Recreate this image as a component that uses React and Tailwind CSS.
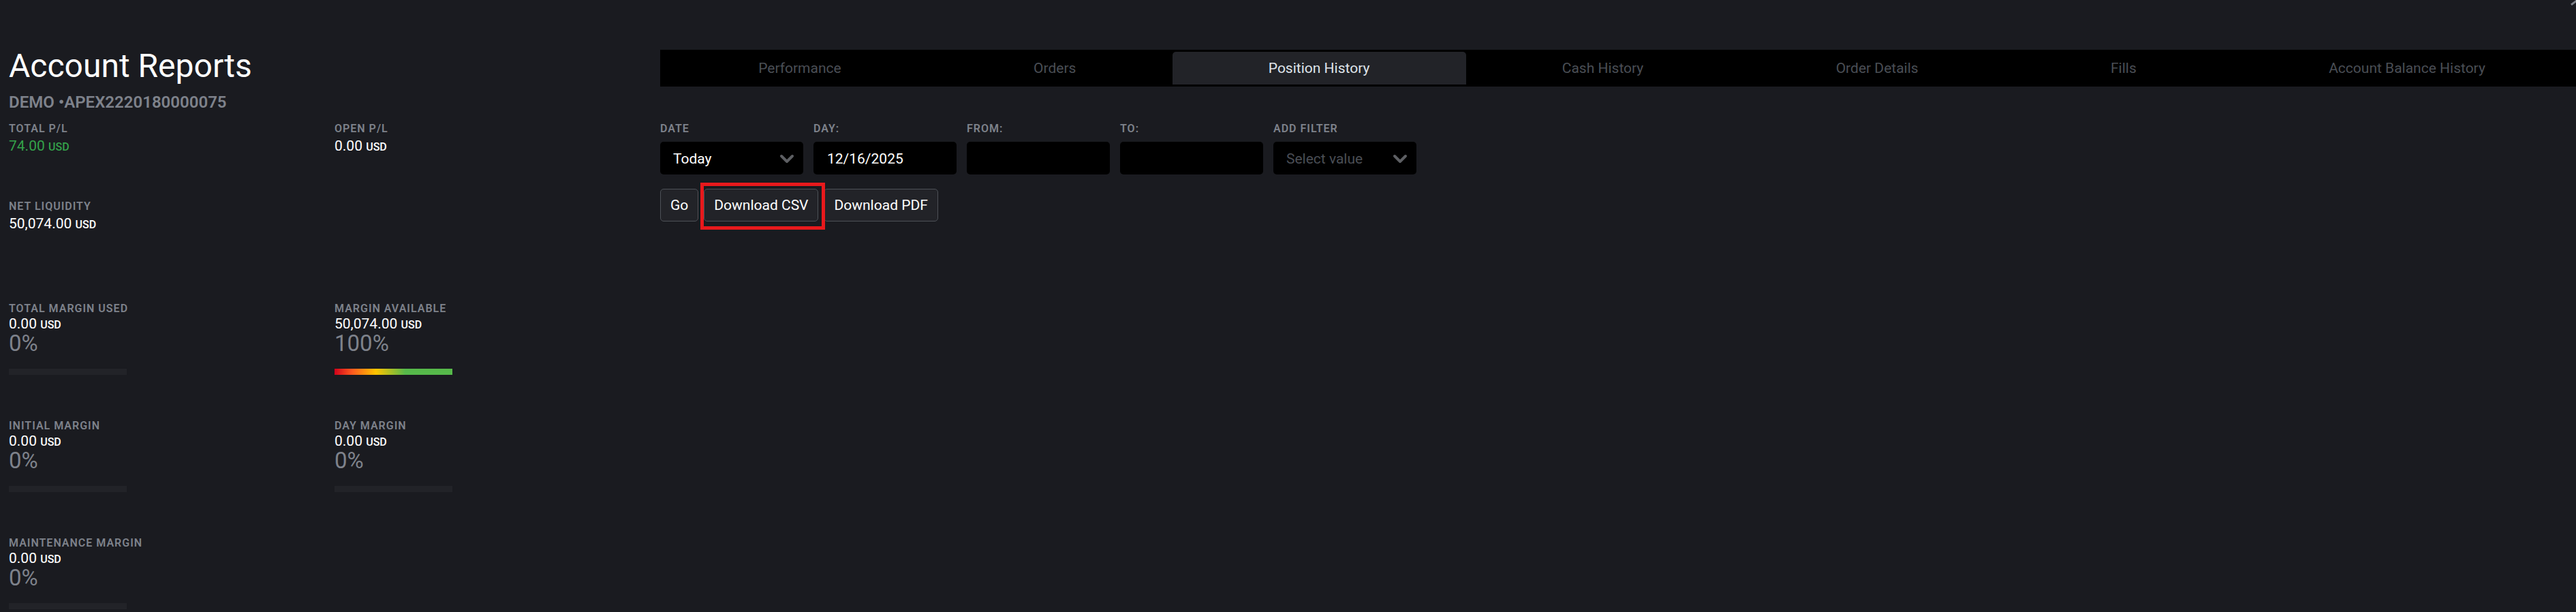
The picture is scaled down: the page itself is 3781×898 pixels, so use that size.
import React, { useState } from 'react';
import { ChevronDown } from 'lucide-react';

const tabs = ['Performance', 'Orders', 'Position History', 'Cash History', 'Order Details', 'Fills', 'Account Balance History'];

const Label = ({ children, ...props }) => (
    <label className="block text-base leading-6 font-semibold tracking-[1px] uppercase text-[#7e828b]" {...props}>{children}</label>
);

const Amount = ({ value, className }) => (
    <div className={`text-[21px] ${className}`}>
        {value} <span className="text-base leading-none font-medium">USD</span>
    </div>
);

const Stat = ({ label, value, className = 'text-white' }) => (
    <div>
        <div className="text-base leading-6 font-semibold tracking-[1px] uppercase text-[#7e828b]">{label}</div>
        <Amount value={value} className={`leading-[26px] ${className}`} />
    </div>
);

const MarginStat = ({ label, value, percent }) => (
    <div>
        <div className="text-base leading-5 font-semibold tracking-[1px] uppercase text-[#7e828b]">{label}</div>
        <Amount value={value} className="leading-6 text-white" />
        <div className="text-[33px] leading-[34px] text-[#7e828b]">{percent}%</div>
        <div className="mt-5 h-[9px] w-[173px] bg-[#222328]">
            <div
                className="h-full bg-[linear-gradient(90deg,#d0021b_0%,#ff5a1f_15%,#ffc400_35%,#56b94a_60%)]"
                style={{ width: `${percent}%` }}
            />
        </div>
    </div>
);

const TextField = ({ id, label, value, onChange }) => (
    <div>
        <Label htmlFor={id}>{label}</Label>
        <input
            id={id}
            type="text"
            value={value}
            onChange={(e) => onChange(e.target.value)}
            className="mt-[7px] block h-12 w-[210px] rounded-[5px] bg-black px-5 pt-0.5 text-[21px] text-white focus:outline-none"
        />
    </div>
);

const SelectField = ({ id, label, options, className }) => (
    <div>
        <Label htmlFor={id}>{label}</Label>
        <div className="relative mt-[7px]">
            <select id={id} className={`block h-12 w-[210px] appearance-none rounded-[5px] bg-black pt-1 pr-10 pl-[19px] text-[21px] focus:outline-none ${className}`}>
                {options.map((option) => (
                    <option key={option}>{option}</option>
                ))}
            </select>
            <ChevronDown className="pointer-events-none absolute top-[9px] right-2 size-8 text-[#5d5f63]" strokeWidth={3} />
        </div>
    </div>
);

const buttonClass = 'h-12 rounded-[5px] border border-[#4d5157] bg-[#222328] px-3.5 pt-0.5 text-[21px] text-white';

const App = () => {
    const [activeTab, setActiveTab] = useState('Position History');
    const [day, setDay] = useState('12/16/2025');
    const [from, setFrom] = useState('');
    const [to, setTo] = useState('');

    return (
        <div className="relative flex min-h-screen overflow-hidden bg-[#1a1b20] pl-[13px] font-[Roboto,sans-serif]">
            <aside className="w-[956px] shrink-0 pt-[69px]">
                <h1 className="text-5xl leading-[56px] text-white">Account Reports</h1>
                <h2 className="mt-[9px] text-2xl leading-8 font-semibold text-[#7e828b]">DEMO •APEX2220180000075</h2>

                <div className="mt-[11px] grid grid-cols-2 gap-y-16">
                    <Stat label="Total P/L" value="74.00" className="text-[#34a24a]" />
                    <Stat label="Open P/L" value="0.00" />
                    <Stat label="Net Liquidity" value="50,074.00" />
                </div>

                <div className="mt-[102px] grid grid-cols-2 gap-y-[65px]">
                    <MarginStat label="Total Margin Used" value="0.00" percent={0} />
                    <MarginStat label="Margin Available" value="50,074.00" percent={100} />
                    <MarginStat label="Initial Margin" value="0.00" percent={0} />
                    <MarginStat label="Day Margin" value="0.00" percent={0} />
                    <MarginStat label="Maintenance Margin" value="0.00" percent={0} />
                </div>
            </aside>

            <main className="-mr-[11px] min-w-0 flex-1 pt-[73px]">
                <nav className="flex bg-black p-[3px]">
                    {tabs.map((tab) => (
                        <button
                            key={tab}
                            type="button"
                            onClick={() => setActiveTab(tab)}
                            className={`h-12 flex-auto rounded-t-[5px] pt-0.5 text-[21px] ${tab === activeTab ? 'bg-[#222328] text-[#dfe3ea]' : 'text-[#4a4e55]'}`}
                        >
                            {tab}
                        </button>
                    ))}
                </nav>

                <form onSubmit={(e) => e.preventDefault()}>
                    <div className="mt-[50px] flex gap-[15px]">
                        <SelectField id="date" label="Date" options={['Today']} className="text-white" />
                        <TextField id="day" label="Day:" value={day} onChange={setDay} />
                        <TextField id="from" label="From:" value={from} onChange={setFrom} />
                        <TextField id="to" label="To:" value={to} onChange={setTo} />
                        <SelectField id="filter" label="Add Filter" options={['Select value']} className="text-[#4a4e55]" />
                    </div>

                    <div className="mt-[21px] flex gap-2">
                        <button type="submit" className={buttonClass}>Go</button>
                        <div className="relative z-10">
                            <button type="button" className={buttonClass}>Download CSV</button>
                            {/* highlight around the CSV button */}
                            <div className="pointer-events-none absolute -top-[9px] -right-[10px] -bottom-3 -left-[5px] border-[5px] border-[#e8191c]" />
                        </div>
                        <button type="button" className={buttonClass}>Download PDF</button>
                    </div>
                </form>
            </main>

            {/* close icon, partly outside the panel */}
            <svg className="absolute top-0 right-0 h-2 w-2" viewBox="0 0 8 8" fill="none" stroke="#7c7f87" strokeWidth="3">
                <path d="M1 7L9 1" />
            </svg>
        </div>
    );
};

export default App;
